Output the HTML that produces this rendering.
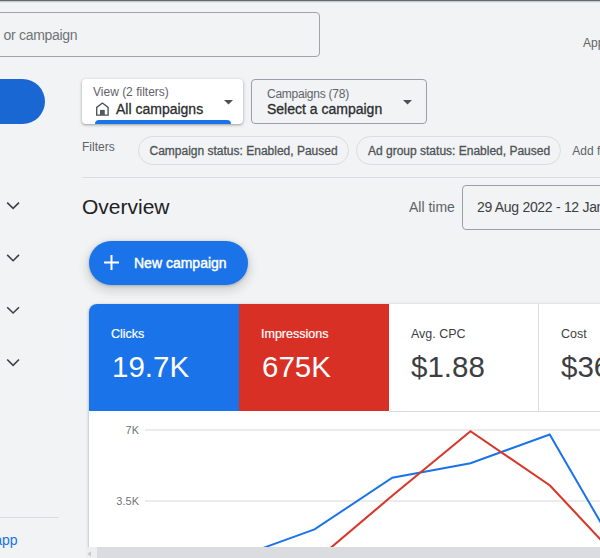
<!DOCTYPE html>
<html><head><meta charset="utf-8">
<style>
*{margin:0;padding:0;box-sizing:border-box}
html,body{width:600px;height:558px;overflow:hidden;background:#f1f3f4;font-family:"Liberation Sans",sans-serif;position:relative}
.a{position:absolute;white-space:nowrap}
.t{position:absolute;white-space:nowrap;line-height:1}
</style></head><body>
<!-- top shadow line -->
<div class="a" style="left:0;top:0;width:600px;height:1px;background:#5f6b75"></div>
<div class="a" style="left:0;top:1px;width:600px;height:1px;background:#c4c8cb"></div>
<div class="a" style="left:0;top:2px;width:600px;height:1px;background:#e6e8ea"></div>

<!-- search box -->
<div class="a" style="left:-20px;top:12px;width:340px;height:45px;border:1px solid #a0a4a8;border-radius:4px"></div>
<div class="t" id="srch" style="right:522.7px;top:28px;font-size:14px;letter-spacing:-0.3px;color:#707478">or campaign</div>
<div class="t" id="app1" style="left:583px;top:36.5px;font-size:12px;color:#5f6368">App</div>

<!-- left nav -->
<div class="a" style="left:-40px;top:79px;width:85px;height:45px;border-radius:23px;background:#1967d2"></div>
<svg class="a" style="left:0;top:0" width="40" height="400">
 <g fill="none" stroke="#3c4043" stroke-width="1.6">
  <path d="M7.2 202.6 L13.1 208.4 L19 202.6"/>
  <path d="M7.2 254.9 L13.1 260.7 L19 254.9"/>
  <path d="M7.2 307.2 L13.1 313.0 L19 307.2"/>
  <path d="M7.2 359.5 L13.1 365.3 L19 359.5"/>
 </g>
</svg>
<div class="a" style="left:0;top:517px;width:59px;height:1px;background:#dadce0"></div>
<div class="t" id="app2" style="right:582.4px;top:533px;font-size:14px;color:#1a73e8">app</div>

<!-- view card -->
<div class="a" style="left:82px;top:79px;width:161px;height:45px;background:#fff;border-radius:4px;box-shadow:0 1px 2px rgba(60,64,67,.3),0 1px 3px 1px rgba(60,64,67,.15);overflow:hidden">
  <div class="a" style="left:13px;top:41px;width:136px;height:8px;background:#1a73e8;border-radius:4px 4px 0 0"></div>
</div>
<div class="t" id="view" style="left:93px;top:85.8px;font-size:12px;color:#5f6368">View (2 filters)</div>
<svg class="a" style="left:96px;top:102px" width="14" height="14" viewBox="0 0 14 14">
  <path d="M0.7 13.05 V5.4 L6.4 1 L12.1 5.4 V13.05 Z" fill="none" stroke="#4d5156" stroke-width="1.35"/>
  <rect x="4" y="7.9" width="4.8" height="5.1" fill="#55595e"/>
</svg>
<div class="t" id="allc" style="left:116px;top:101.6px;font-size:14px;-webkit-text-stroke:0.3px;color:#2a2d31">All campaigns</div>
<svg class="a" style="left:224.2px;top:99.7px" width="10" height="6"><path d="M0 0 H9 L4.5 4.6 Z" fill="#4d5156"/></svg>

<!-- campaigns select -->
<div class="a" style="left:251px;top:79px;width:176px;height:45px;border:1px solid #9aa0a6;border-radius:4px"></div>
<div class="t" id="camp" style="left:267px;top:87.5px;font-size:12px;letter-spacing:-0.25px;color:#5f6368">Campaigns (78)</div>
<div class="t" id="selc" style="left:267px;top:101.6px;font-size:14px;-webkit-text-stroke:0.3px;color:#2a2d31">Select a campaign</div>
<svg class="a" style="left:402.6px;top:99.6px" width="10" height="6"><path d="M0 0 H9 L4.5 4.6 Z" fill="#4d5156"/></svg>

<!-- filters -->
<div class="t" id="filt" style="left:82px;top:140.6px;font-size:12px;color:#5f6368">Filters</div>
<div class="a" style="left:138px;top:136px;width:211px;height:29px;border:1px solid #dadce0;border-radius:15px"></div>
<div class="t" id="chip1" style="left:149.5px;top:144.7px;font-size:12px;-webkit-text-stroke:0.3px;color:#4f5357">Campaign status: Enabled, Paused</div>
<div class="a" style="left:356px;top:136px;width:205px;height:29px;border:1px solid #dadce0;border-radius:15px"></div>
<div class="t" id="chip2" style="left:368px;top:144.7px;font-size:12px;-webkit-text-stroke:0.3px;color:#4f5357">Ad group status: Enabled, Paused</div>
<div class="t" id="addf" style="left:572.3px;top:144.8px;font-size:12px;color:#5f6368">Add filter</div>
<div class="a" style="left:82px;top:177px;width:520px;height:1px;background:#dadce0"></div>

<!-- overview -->
<div class="t" id="ovw" style="left:82px;top:195.8px;font-size:21px;color:#202124">Overview</div>
<div class="t" id="allt" style="left:409px;top:199.9px;font-size:14px;color:#5f6368">All time</div>
<div class="a" style="left:462px;top:185px;width:200px;height:45px;border:1px solid #9aa0a6;border-radius:4px"></div>
<div class="t" id="date" style="left:477px;top:199.9px;font-size:14px;letter-spacing:-0.3px;color:#3c4043">29 Aug 2022 - 12 Jan 2023</div>

<!-- FAB -->
<div class="a" style="left:89px;top:241px;width:159px;height:44px;border-radius:22px;background:#1a73e8;box-shadow:0 1px 3px 0 rgba(60,64,67,.3),0 4px 8px 3px rgba(60,64,67,.15)"></div>
<svg class="a" style="left:104px;top:255px" width="15" height="15"><path d="M7.5 0 V15 M0 7.5 H15" stroke="#fff" stroke-width="2"/></svg>
<div class="t" id="newc" style="left:134px;top:255.5px;font-size:14px;-webkit-text-stroke:0.45px #fff;color:#fff">New campaign</div>

<!-- card -->
<div class="a" style="left:89px;top:304px;width:560px;height:300px;background:#fff;border-radius:8px;box-shadow:0 1px 2px rgba(60,64,67,.3),0 1px 3px 1px rgba(60,64,67,.15);overflow:hidden">
  <div class="a" style="left:0;top:0;width:150px;height:107px;background:#1a73e8"></div>
  <div class="a" style="left:150px;top:0;width:150px;height:107px;background:#d93025"></div>
  <div class="a" style="left:449px;top:0;width:1px;height:107px;background:#dadce0"></div>
  <div class="a" style="left:300px;top:107px;width:300px;height:1px;background:#dadce0"></div>
</div>
<div class="t" id="clk" style="left:111px;top:328.4px;font-size:12.5px;-webkit-text-stroke:0.2px #fff;color:#fff">Clicks</div>
<div class="t" id="clkv" style="left:112px;top:352.3px;font-size:29.5px;color:#fff">19.7K</div>
<div class="t" id="imp" style="left:261px;top:328.4px;font-size:12.5px;-webkit-text-stroke:0.2px #fff;color:#fff">Impressions</div>
<div class="t" id="impv" style="left:262px;top:352.3px;font-size:29.5px;color:#fff">675K</div>
<div class="t" id="cpc" style="left:411px;top:328.4px;font-size:12.5px;color:#3c4043">Avg. CPC</div>
<div class="t" id="cpcv" style="left:411px;top:352.3px;font-size:29.5px;color:#3c4043">$1.88</div>
<div class="t" id="cost" style="left:561px;top:328.4px;font-size:12.5px;color:#3c4043">Cost</div>
<div class="t" id="costv" style="left:561px;top:352.3px;font-size:29.5px;color:#3c4043">$367</div>

<!-- chart -->
<div class="t" id="k7" style="right:461px;top:424.9px;font-size:11px;color:#70757a">7K</div>
<div class="t" id="k35" style="right:461px;top:495.7px;font-size:11px;color:#70757a">3.5K</div>
<div class="a" style="left:145px;top:429px;width:460px;height:2px;background:#ebebeb"></div>
<div class="a" style="left:145px;top:500px;width:460px;height:2px;background:#ebebeb"></div>
<svg class="a" style="left:0;top:0" width="600" height="558">
  <polyline fill="none" stroke="#1a73e8" stroke-width="2" points="236,557.7 314.5,529.4 392.3,477.7 470.5,463.3 549.7,434.5 628,569.5"/>
  <polyline fill="none" stroke="#d6392b" stroke-width="2.1" points="314.5,561.5 392.5,495.5 470.5,431.2 550,485.5 628,569"/>
</svg>

<!-- scrollbar -->
<div class="a" style="left:86px;top:547px;width:520px;height:11px;background:#eceef0"></div>
<div class="a" style="left:97px;top:547px;width:510px;height:11px;background:#dadce0"></div>
<svg class="a" style="left:86px;top:550px" width="8" height="8"><path d="M1.3 4 L5 1.3 V6.8 Z" fill="#c8cacd"/></svg>
</body></html>
